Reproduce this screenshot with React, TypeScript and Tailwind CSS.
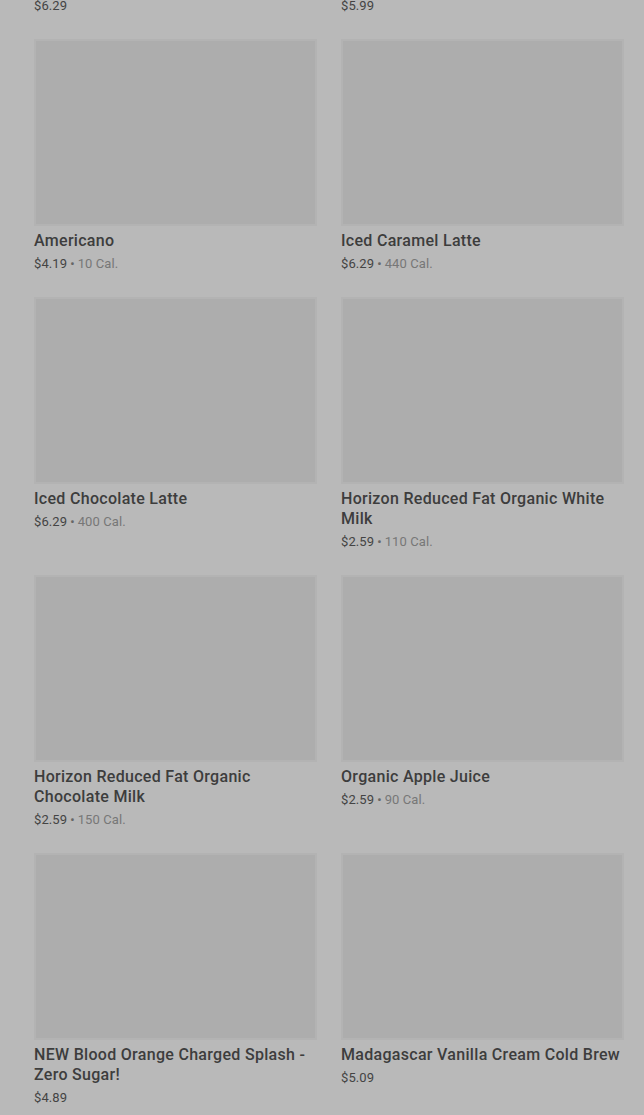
type Item = { name: string; price: string; cal?: string };

const items: Item[] = [
  { name: 'Caffè Latte', price: '$6.29' },
  { name: 'Cold Brew', price: '$5.99' },
  { name: 'Americano', price: '$4.19', cal: '10 Cal.' },
  { name: 'Iced Caramel Latte', price: '$6.29', cal: '440 Cal.' },
  { name: 'Iced Chocolate Latte', price: '$6.29', cal: '400 Cal.' },
  { name: 'Horizon Reduced Fat Organic White Milk', price: '$2.59', cal: '110 Cal.' },
  { name: 'Horizon Reduced Fat Organic Chocolate Milk', price: '$2.59', cal: '150 Cal.' },
  { name: 'Organic Apple Juice', price: '$2.59', cal: '90 Cal.' },
  { name: 'NEW Blood Orange Charged Splash - Zero Sugar!', price: '$4.89' },
  { name: 'Madagascar Vanilla Cream Cold Brew', price: '$5.09' },
];

function ItemCard({ item }: { item: Item }) {
  return (
    <div className="flex flex-col">
      {/* image placeholder */}
      <div className="h-[187px] w-full border-2 border-[#b3b3b3] bg-[#adadad]" />
      <div className="mt-[5px] text-[16px] leading-5 font-medium text-[#3d3d3d] tracking-[0.3px]">
        {item.name}
      </div>
      <div className="mt-[3px] flex items-center text-[13px] leading-5 text-[#444] tracking-[0.1px]">
        <span>{item.price}</span>
        {item.cal && (
          <>
            <span className="mx-[3px] text-[#666]">•</span>
            <span className="text-[#777]">{item.cal}</span>
          </>
        )}
      </div>
    </div>
  );
}

export default function App() {
  return (
    <div
      className="h-[1115px] w-[644px] overflow-hidden bg-[#b9b9b9]"
      style={{ fontFamily: 'Roboto, "Noto Sans", Arial, sans-serif' }}
    >
      <div className="mt-[-219px] grid grid-cols-2 gap-x-6 gap-y-[23px] pl-[34px] pr-5">
        {items.map((item) => (
          <ItemCard key={item.name} item={item} />
        ))}
      </div>
    </div>
  );
}
